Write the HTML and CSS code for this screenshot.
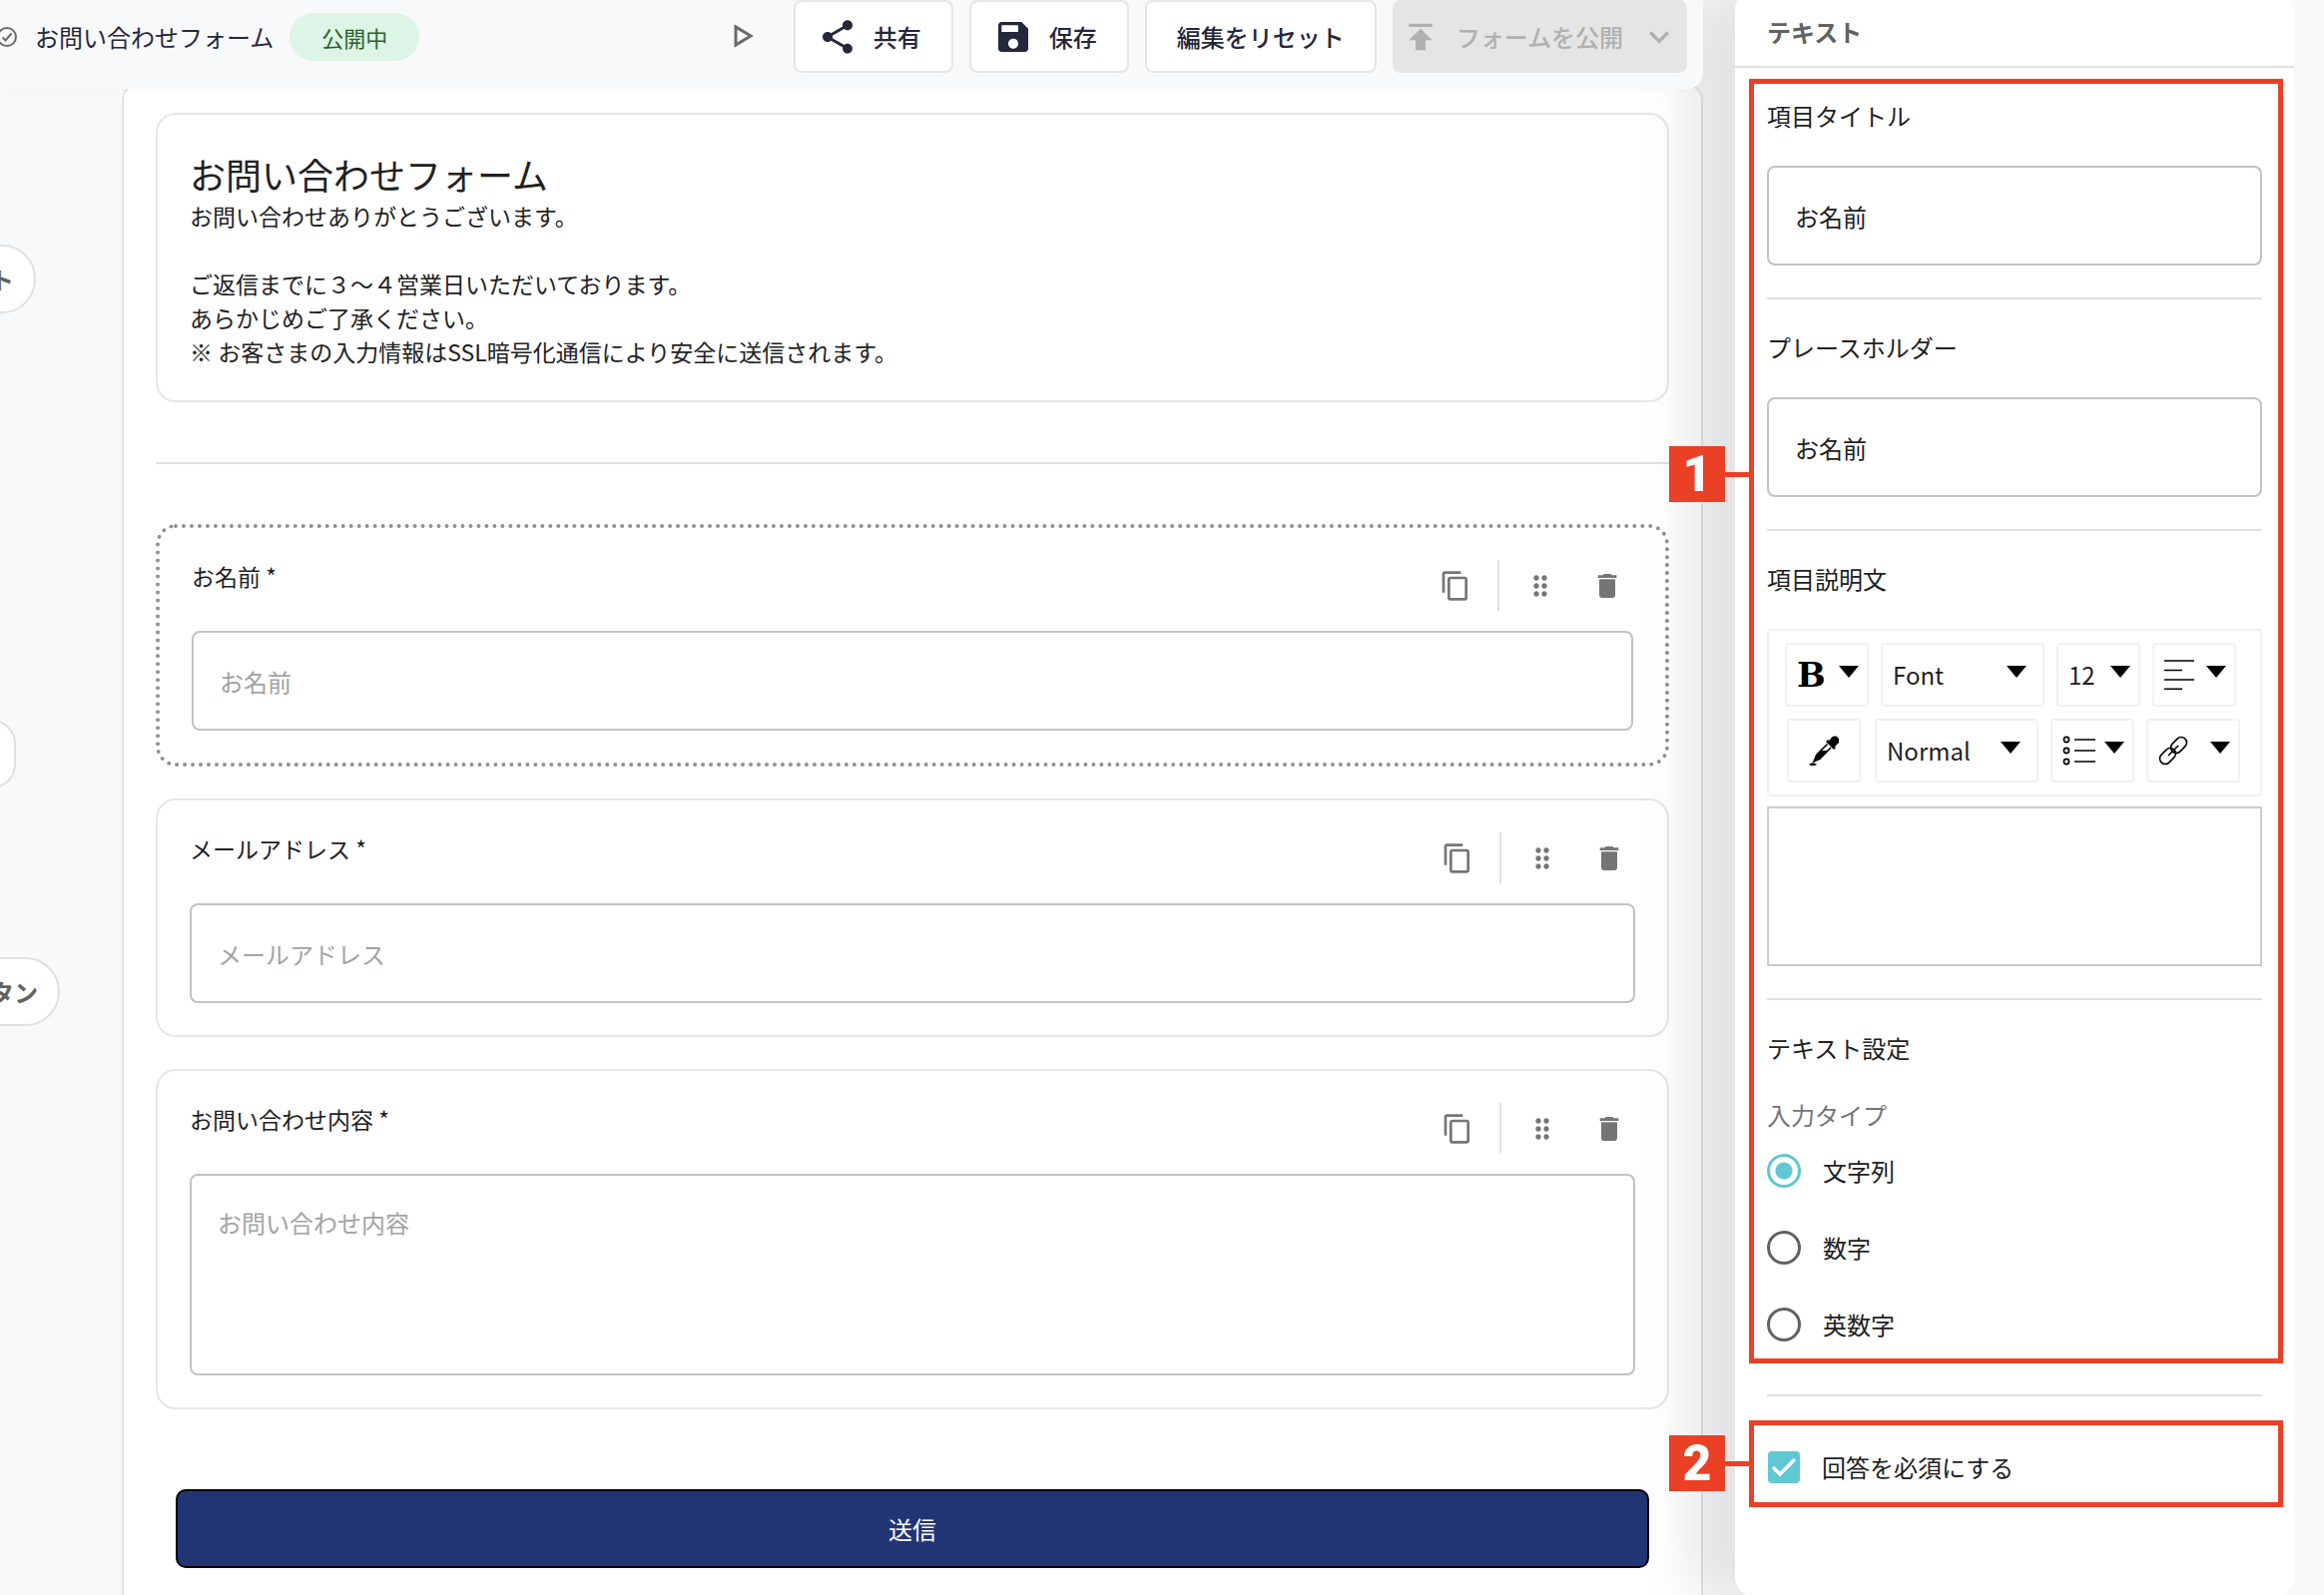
FILE: index.html
```html
<!DOCTYPE html>
<html lang="ja">
<head>
<meta charset="utf-8">
<title>お問い合わせフォーム</title>
<link rel="stylesheet" href="styles.css">
</head>
<body>
<svg class="sprite" aria-hidden="true">
  <symbol id="copy" viewBox="0 0 24 24"><path d="M16 1H4c-1.100 0-2 .9-2 2v14h2V3h12V1zm3 4H8c-1.100 0-2 .9-2 2v14c0 1.100.9 2 2 2h11c1.100 0 2-.9 2-2V7c0-1.100-.9-2-2-2zm0 16H8V7h11v14z"/></symbol>
  <symbol id="drag" viewBox="0 0 24 24"><path d="M11 18c0 1.100-.9 2-2 2s-2-.9-2-2 .9-2 2-2 2 .9 2 2zm-2-8c-1.100 0-2 .9-2 2s.9 2 2 2 2-.9 2-2-.9-2-2-2zm0-6c-1.100 0-2 .9-2 2s.9 2 2 2 2-.9 2-2-.9-2-2-2zm6 4c1.100 0 2-.9 2-2s-.9-2-2-2-2 .9-2 2 .9 2 2 2zm0 2c-1.100 0-2 .9-2 2s.9 2 2 2 2-.9 2-2-.9-2-2-2zm0 6c-1.100 0-2 .9-2 2s.9 2 2 2 2-.9 2-2-.9-2-2-2z"/></symbol>
  <symbol id="trash" viewBox="0 0 24 24"><path d="M6 19c0 1.100.9 2 2 2h8c1.100 0 2-.9 2-2V7H6v12zM19 4h-3.500l-1-1h-5l-1 1H5v2h14V4z"/></symbol>
  <symbol id="caret" viewBox="0 0 20 12"><path d="M0 0h20L10 12z"/></symbol>
</svg>

<div class="app">
  <nav class="palette" aria-label="項目一覧">
    <ul class="palette-list">
      <li><button class="pill" type="button">ト</button></li>
      <li></li>
      <li><button class="pill" type="button" aria-label="項目を追加"></button></li>
      <li><button class="pill" type="button">タン</button></li>
    </ul>
  </nav>

  <div class="workspace">
    <header class="topbar">
      <svg class="status-icon" viewBox="0 0 24 24" aria-hidden="true"><circle cx="12" cy="12" r="9"/><path d="M7.500 12.500l3 3 6-7"/></svg>
      <span class="form-name">お問い合わせフォーム</span>
      <span class="badge">公開中</span>
      <div class="actions">
        <button class="play" type="button" aria-label="プレビュー"><svg viewBox="0 0 20 24"><path d="M2 3v18l15-9z"/></svg></button>
        <button class="btn" type="button"><svg class="icon40" viewBox="0 0 24 24"><path d="M18 16.080c-.76 0-1.440.3-1.960.77L8.910 12.700c.05-.23.09-.46.09-.7s-.04-.47-.09-.7l7.050-4.110c.54.5 1.250.81 2.040.81 1.660 0 3-1.340 3-3s-1.340-3-3-3-3 1.340-3 3c0 .24.04.47.09.7L8.040 9.810C7.500 9.310 6.790 9 6 9c-1.660 0-3 1.340-3 3s1.340 3 3 3c.79 0 1.500-.31 2.040-.81l7.120 4.160c-.05.21-.08.43-.08.65 0 1.610 1.310 2.920 2.920 2.920s2.920-1.310 2.920-2.920-1.310-2.920-2.920-2.920z"/></svg>共有</button>
        <button class="btn" type="button"><svg class="icon40" viewBox="0 0 24 24"><path d="M17 3H5c-1.110 0-2 .9-2 2v14c0 1.100.89 2 2 2h14c1.100 0 2-.9 2-2V7l-4-4zm-5 16c-1.660 0-3-1.340-3-3s1.340-3 3-3 3 1.340 3 3-1.340 3-3 3zm3-10H5V5h10v4z"/></svg>保存</button>
        <button class="btn btn-reset" type="button">編集をリセット</button>
        <button class="btn btn-publish" type="button" disabled><svg class="icon40" viewBox="0 0 24 24"><path d="M5 4v2h14V4H5zm0 10h4v6h6v-6h4l-7-7-7 7z"/></svg>フォームを公開<svg class="icon40" viewBox="0 0 24 24"><path d="M16.590 8.590L12 13.170 7.410 8.590 6 10l6 6 6-6z"/></svg></button>
      </div>
    </header>

    <main class="canvas">
      <section class="card intro">
        <h1>お問い合わせフォーム</h1>
        <p>お問い合わせありがとうございます。<br><br>ご返信までに３～４営業日いただいております。<br>あらかじめご了承ください。<br>※ お客さまの入力情報はSSL暗号化通信により安全に送信されます。</p>
      </section>
      <hr class="split">
      <form class="fields">
        <div class="card selected">
          <div class="card-head">
            <label for="f-name">お名前 *</label>
            <div class="tools">
              <button type="button" aria-label="複製"><svg class="ic-copy"><use href="#copy"/></svg></button>
              <span class="bar"></span>
              <button type="button" aria-label="移動"><svg class="ic-drag"><use href="#drag"/></svg></button>
              <button type="button" aria-label="削除"><svg class="ic-trash"><use href="#trash"/></svg></button>
            </div>
          </div>
          <input class="field" id="f-name" type="text" placeholder="お名前">
        </div>
        <div class="card">
          <div class="card-head">
            <label for="f-mail">メールアドレス *</label>
            <div class="tools">
              <button type="button" aria-label="複製"><svg class="ic-copy"><use href="#copy"/></svg></button>
              <span class="bar"></span>
              <button type="button" aria-label="移動"><svg class="ic-drag"><use href="#drag"/></svg></button>
              <button type="button" aria-label="削除"><svg class="ic-trash"><use href="#trash"/></svg></button>
            </div>
          </div>
          <input class="field" id="f-mail" type="text" placeholder="メールアドレス">
        </div>
        <div class="card">
          <div class="card-head">
            <label for="f-body">お問い合わせ内容 *</label>
            <div class="tools">
              <button type="button" aria-label="複製"><svg class="ic-copy"><use href="#copy"/></svg></button>
              <span class="bar"></span>
              <button type="button" aria-label="移動"><svg class="ic-drag"><use href="#drag"/></svg></button>
              <button type="button" aria-label="削除"><svg class="ic-trash"><use href="#trash"/></svg></button>
            </div>
          </div>
          <textarea class="field area" id="f-body" placeholder="お問い合わせ内容"></textarea>
        </div>
        <button class="submit" type="button">送信</button>
      </form>
    </main>
  </div>

  <aside class="inspector">
    <h2>テキスト</h2>
    <div class="group">
      <section>
        <label class="title" for="p-title">項目タイトル</label>
        <input class="field" id="p-title" type="text" value="お名前">
      </section>
      <section>
        <label class="title" for="p-holder">プレースホルダー</label>
        <input class="field" id="p-holder" type="text" value="お名前">
      </section>
      <section>
        <label class="title" for="p-desc">項目説明文</label>
        <div class="editor-bar">
          <div class="editor-row">
            <button class="tool" type="button" aria-label="太字"><span class="bold">B</span><svg class="caret"><use href="#caret"/></svg></button>
            <button class="tool wide" type="button">Font<svg class="caret"><use href="#caret"/></svg></button>
            <button class="tool" type="button">12<svg class="caret"><use href="#caret"/></svg></button>
            <button class="tool" type="button" aria-label="配置"><svg class="line-icon" viewBox="0 0 30 30"><path d="M0 1h30M0 10.500h18M0 20h30M0 29.200h18"/></svg><svg class="caret"><use href="#caret"/></svg></button>
          </div>
          <div class="editor-row">
            <button class="tool pick" type="button" aria-label="文字色"><svg class="line-icon" viewBox="0 0 30 30"><path class="solid" d="M20 5l2-2c2-3 5-3 7-1s2 5-1 7l-2 2 1 1-2 2-8-8 2-2z"/><path d="M18.500 8.500L8 19l-3 7 6-3L22 12"/><path class="solid" d="M11.500 15h8l-8.500 9-6 1.500 1.500-5z"/><path class="solid" d="M0 29c2-2 6-2 8 0-2 1.500-6 1.500-8 0z"/></svg></button>
            <button class="tool wide" type="button">Normal<svg class="caret"><use href="#caret"/></svg></button>
            <button class="tool" type="button" aria-label="リスト"><svg class="line-icon list" viewBox="0 0 34 30"><circle cx="4" cy="4" r="2.600"/><circle cx="4" cy="15" r="2.600"/><circle cx="4" cy="26" r="2.600"/><path d="M12 4h21M12 15h21M12 26h21"/></svg><svg class="caret"><use href="#caret"/></svg></button>
            <button class="tool link" type="button" aria-label="リンク"><svg class="line-icon" viewBox="0 0 30 30"><rect x="11.500" y="4" width="18" height="11" rx="5.500" transform="rotate(-45 20.500 9.500)"/><rect x=".5" y="15" width="18" height="11" rx="5.500" transform="rotate(-45 9.500 20.500)"/><path d="M10 20L20 10"/></svg><svg class="caret"><use href="#caret"/></svg></button>
          </div>
        </div>
        <textarea class="editor" id="p-desc"></textarea>
      </section>
      <section>
        <h3 class="title">テキスト設定</h3>
        <fieldset>
          <legend>入力タイプ</legend>
          <label class="choice"><input type="radio" name="type" checked>文字列</label>
          <label class="choice"><input type="radio" name="type">数字</label>
          <label class="choice"><input type="radio" name="type">英数字</label>
        </fieldset>
      </section>
      <div class="frame"><span class="tag">1</span></div>
    </div>
    <div class="group required">
      <section>
        <label class="choice"><input type="checkbox" checked>回答を必須にする</label>
      </section>
      <div class="frame"><span class="tag">2</span></div>
    </div>
  </aside>
</div>
</body>
</html>
```
FILE: styles.css
```css
* { box-sizing: border-box; }

body {
  margin: 0;
  background: #f8f9fb;
  color: #212121;
  font-family: "Noto Sans CJK JP", sans-serif;
  font-size: 24px;
  line-height: 34px;
}

button, input, textarea { font: inherit; color: inherit; }
button { padding: 0; border: 0; background: none; }
h1, h2, h3, p, ul, fieldset { margin: 0; padding: 0; border: 0; font-weight: 400; }
svg { display: block; flex: none; fill: currentColor; }
.sprite { position: absolute; width: 0; height: 0; }

.app {
  display: flex;
  min-height: 100vh;
  padding-right: 30px;
  overflow: hidden;
}

/* Item palette, scrolled partly out of view on the left */
.palette { width: 122px; flex: none; }
.palette-list { margin-left: -32px; padding-top: 245px; list-style: none; }
.palette-list li { height: 238px; }
.pill {
  min-width: 48px;
  height: 69px;
  padding: 0 20px;
  border: 2px solid #e0e0e0;
  border-radius: 35px;
  background: #fff;
  color: #616161;
  font-weight: 700;
  vertical-align: top;
}

/* Top bar */
.workspace { flex: 1; min-width: 0; display: flex; flex-direction: column; }
.topbar {
  position: relative;
  z-index: 3;
  display: flex;
  align-items: flex-start;
  height: 89px;
  margin-left: -122px;
  padding-right: 16px;
  border-radius: 0 0 16px 0;
  background: #f8f9fb;
  box-shadow: 0 4px 10px rgba(0, 0, 0, .02);
  color: #25273a;
}
.status-icon {
  width: 24px; height: 24px;
  margin: 25px 16px 0 -5px;
  fill: none; stroke: #6b6b6b; stroke-width: 2;
}
.form-name { margin-top: 20px; }
.badge {
  height: 48px;
  margin: 13px 0 0 16px;
  padding: 0 32px;
  border-radius: 24px;
  background: #dcf5e6;
  color: #2c6128;
  font-size: 22px;
  line-height: 48px;
}
.actions { display: flex; gap: 16px; margin-left: auto; }
.play { height: 72px; width: 20px; margin-right: 24px; color: #6b6b6b; }
.play svg { width: 20px; height: 26px; fill: none; stroke: currentColor; stroke-width: 3; }
.btn {
  display: flex;
  align-items: center;
  gap: 16px;
  height: 73px;
  padding: 0 30px 0 22px;
  border: 2px solid #e6e6e6;
  border-radius: 8px;
  background: #fff;
  font-weight: 500;
}
.btn-reset { padding: 0 30px; }
.btn-publish { padding: 0 6px; border-color: #e5e5e5; background: #e5e5e5; color: #b0b0b0; }
.icon40 { width: 40px; height: 40px; }

/* Form being edited */
.canvas {
  flex: 1;
  margin-top: -5px;
  padding: 27px 32px 24px;
  border: 2px solid #e6e6e6;
  border-bottom: 0;
  border-radius: 16px 16px 0 0;
  background: #fff;
}
.card { padding: 32px; border: 2px solid #e6e6e6; border-radius: 20px; }
.intro { padding: 34px 32px 32px; }
.intro h1 { font-size: 36px; line-height: 50px; }
.intro p { font-size: 23px; }
.split { height: 2px; margin: 60px 0; border: 0; background: #e0e0e0; }
.fields { display: flex; flex-direction: column; gap: 32px; }
.selected { border: 4px dotted #8f8f98; }
.card-head { display: flex; justify-content: space-between; height: 51px; margin-bottom: 20px; font-size: 23px; line-height: 32px; }
.tools { display: flex; align-items: center; color: #757575; }
.bar { width: 2px; height: 51px; margin: 0 24px 0 26px; background: #e0e0e0; }
.ic-copy { width: 32px; height: 32px; }
.ic-drag { width: 34px; height: 32px; }
.ic-trash { width: 32px; height: 32px; margin: 0 10px 0 34px; }

.field {
  display: block;
  width: 100%;
  height: 100px;
  padding: 0 26px;
  border: 2px solid #c2c2c2;
  border-radius: 8px;
  background: #fff;
}
.field::placeholder { color: #a3a3a3; opacity: 1; }
.area { height: 202px; padding-top: 30px; resize: none; }
.submit {
  height: 79px;
  margin: 48px 20px 0;
  border: 2px solid #000;
  border-radius: 10px;
  background: #213575;
  color: #fff;
}

/* Settings of the selected item */
.inspector {
  position: relative;
  z-index: 2;
  width: 560px;
  flex: none;
  margin: -10px 0 -2px 32px;
  padding-top: 10px;
  border-radius: 20px;
  background: #fff;
  box-shadow: -50px 0 50px rgba(16, 12, 0, .085);
}
.inspector h2 {
  padding: 15px 32px 17px;
  border-bottom: 2px solid #e0e0e0;
  color: #616161;
  font-size: 24px;
  font-weight: 700;
}
.group { position: relative; padding: 0 32px; }
.group section { padding: 32px 0; }
.group section + section { border-top: 2px solid #e0e0e0; }
.title { display: block; font-size: 24px; line-height: 32px; }
.group .field, .editor-bar, fieldset { margin-top: 34px; }
.required section { border-top: 2px solid #e0e0e0; }

.editor-bar {
  display: flex;
  flex-direction: column;
  gap: 12px;
  padding: 12px 16px;
  border: 2px solid #f1f1f1;
  border-radius: 4px;
}
.editor-row { display: flex; gap: 12px; }
.tool {
  display: flex;
  align-items: center;
  justify-content: space-between;
  width: 84px;
  height: 64px;
  padding: 0 8px 0 10px;
  border: 2px solid #f1f1f1;
  border-radius: 4px;
  background: #fff;
}
.wide { width: 164px; padding: 0 16px 0 10px; }
.pick { width: 74px; margin: 0 2px; justify-content: center; padding: 0; }
.link { width: 94px; }
.caret { width: 20px; height: 12px; margin-bottom: 6px; color: #000; }
.bold { color: #000; font: 700 34px/60px "DejaVu Serif", serif; }
.line-icon { width: 30px; height: 30px; fill: none; stroke: #000; stroke-width: 1.6; }
.line-icon .solid { fill: #000; stroke: none; }
.list { width: 34px; }
.editor {
  display: block;
  width: 100%;
  height: 160px;
  margin-top: 10px;
  border: 2px solid #ccc;
  background: #fff;
  resize: none;
}

legend { padding: 0; color: #757575; }
.choice { display: flex; align-items: center; gap: 22px; height: 77px; }
.choice input { appearance: none; flex: none; margin: 0; }
.choice input[type="radio"] {
  width: 34px; height: 34px;
  border: 3px solid #616161;
  border-radius: 50%;
}
.choice input[type="radio"]:checked {
  border-color: #5fc8d3;
  background: radial-gradient(circle, #5fc8d3 8px, transparent 9px);
}
.choice input[type="checkbox"] {
  width: 32px; height: 32px;
  margin-left: 1px;
  border-radius: 4px;
  background: #5fc8d3 url("data:image/svg+xml,%3Csvg xmlns='http://www.w3.org/2000/svg' viewBox='0 0 32 32'%3E%3Cpath d='M5 16l7 7L27 8' fill='none' stroke='%23fff' stroke-width='3.500'/%3E%3C/svg%3E");
}

/* Numbered callouts */
.frame { position: absolute; inset: 11px 11px 31px 14px; border: 5px solid #ea4025; pointer-events: none; }
.required .frame { inset: 26px 11px 30px 14px; }
.tag {
  position: absolute;
  top: 363px;
  right: 100%;
  width: 56px;
  height: 56px;
  margin-right: 29px;
  background: #ea4025;
  color: #fff;
  font: 900 50px/56px Roboto, sans-serif;
  text-align: center;
}
.required .tag { top: 10px; }
.tag::after {
  content: "";
  position: absolute;
  top: 26px;
  left: 100%;
  width: 25px;
  height: 5px;
  background: #ea4025;
}
```
